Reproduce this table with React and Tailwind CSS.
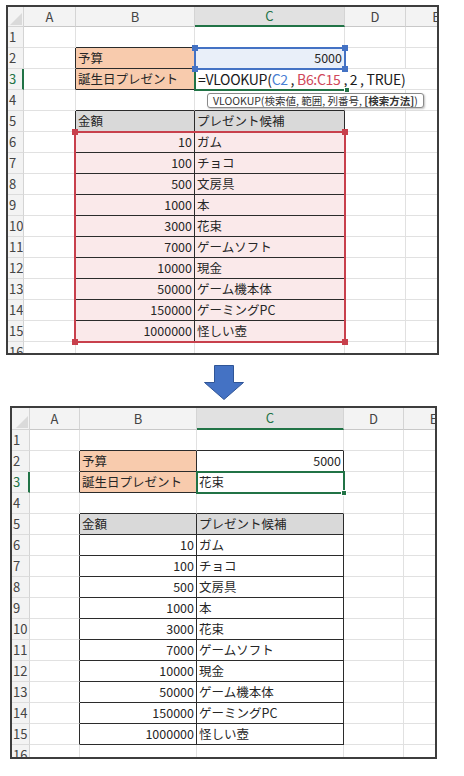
import React from 'react'

const items = [
  [10, 'ガム'],
  [100, 'チョコ'],
  [500, '文房具'],
  [1000, '本'],
  [3000, '花束'],
  [7000, 'ゲームソフト'],
  [10000, '現金'],
  [50000, 'ゲーム機本体'],
  [150000, 'ゲーミングPC'],
  [1000000, '怪しい壺'],
]

const font = { fontFamily: '"Noto Sans CJK JP", "Noto Sans", sans-serif' }

const inTable = (r, c) => (c === 2 || c === 3) && ((r >= 2 && r <= 3) || (r >= 5 && r <= 15))

// value of cell (row, col) in the sheet; col 2 = B, col 3 = C
const cellValue = (r, c, after) => {
  if (r === 2 && c === 2) return { text: '予算' }
  if (r === 3 && c === 2) return { text: '誕生日プレゼント' }
  if (r === 2 && c === 3) return { text: '5000', right: true }
  if (r === 3 && c === 3 && after) return { text: '花束' }
  if (r === 5 && c === 2) return { text: '金額' }
  if (r === 5 && c === 3) return { text: 'プレゼント候補' }
  if (r >= 6 && r <= 15 && c === 2) return { text: String(items[r - 6][0]), right: true }
  if (r >= 6 && r <= 15 && c === 3) return { text: items[r - 6][1] }
  return null
}

const cellFill = (r, c, after) => {
  if ((r === 2 || r === 3) && c === 2) return 'bg-[#f8cbad]'
  if (r === 5 && (c === 2 || c === 3)) return 'bg-[#d9d9d9]'
  if (!after && r === 2 && c === 3) return 'bg-[#e9eff9]'
  if (!after && r >= 6 && r <= 15 && (c === 2 || c === 3)) return 'bg-[#fae9ea]'
  return 'bg-white'
}

const Corner = () => (
  <div className="relative bg-[#f3f3f3] border-r border-b border-[#d4d4d4]">
    <svg className="absolute right-[1px] bottom-[1px]" width="12" height="12" viewBox="0 0 12 12">
      <polygon points="12,0 12,12 0,12" fill="#dadada" />
    </svg>
  </div>
)

function Sheet({ after }) {
  const cols = ['A', 'B', 'C', 'D', 'E']
  const cells = []
  cells.push(<Corner key="corner" />)
  cols.forEach((l) => {
    const sel = l === 'C'
    cells.push(
      <div
        key={'h' + l}
        className={
          'flex items-center justify-center text-[13px] border-r border-[#d4d4d4] ' +
          (sel
            ? 'bg-[#e1e1e1] text-[#217346] border-b-2 border-b-[#217346]'
            : 'bg-[#f3f3f3] text-[#444] border-b border-b-[#c8c8c8]')
        }
        style={font}
      >
        {l}
      </div>
    )
  })
  for (let r = 1; r <= 16; r++) {
    cells.push(
      <div
        key={'r' + r}
        className={
          'flex items-center pl-[1px] text-[13px] bg-[#f3f3f3] border-b border-b-[#dcdcdc] overflow-hidden ' +
          (r === 3 ? 'text-[#217346] border-r-2 border-r-[#217346]' : 'text-[#444] border-r border-r-[#d4d4d4]')
        }
        style={font}
      >
        {r}
      </div>
    )
    for (let c = 1; c <= 5; c++) {
      const v = cellValue(r, c, after)
      const br = inTable(r, c) || inTable(r, c + 1) ? 'border-r-[#2b2b2b]' : 'border-r-[#e1e1e1]'
      const bb = inTable(r, c) || inTable(r + 1, c) ? 'border-b-[#2b2b2b]' : 'border-b-[#e1e1e1]'
      cells.push(
        <div
          key={r + '-' + c}
          className={
            'flex items-center px-[2px] text-[12.5px] text-[#262626] whitespace-nowrap border-r border-b ' +
            br + ' ' + bb + ' ' + cellFill(r, c, after) + (v && v.right ? ' justify-end' : '')
          }
          style={font}
        >
          {v ? v.text : ''}
        </div>
      )
    }
  }
  return cells
}

// range outline with a square handle at each corner
const Range = ({ className, color }) => (
  <div className={'absolute border-2 ' + className}>
    <div className={'absolute -left-[4px] -top-[4px] w-[6px] h-[6px] ' + color} />
    <div className={'absolute -right-[4px] -top-[4px] w-[6px] h-[6px] ' + color} />
    <div className={'absolute -left-[4px] -bottom-[4px] w-[6px] h-[6px] ' + color} />
    <div className={'absolute -right-[4px] -bottom-[4px] w-[6px] h-[6px] ' + color} />
  </div>
)

const Active = ({ className }) => (
  <div className={'absolute border-[#217346] ' + className}>
    <div className="absolute -right-[4px] -bottom-[4px] w-[6px] h-[6px] bg-[#217346] border border-white" />
  </div>
)

function TopSheet() {
  return (
    <div className="ml-[6px] mt-[5px] w-[433px] h-[350px] border-2 border-[#3d3d3d] overflow-hidden">
      <div className="relative grid grid-cols-[16px_52px_119px_150px_61px_61px] grid-rows-[20px_repeat(16,21px)]">
        <Sheet after={false} />

        {/* cell editor over C3 with the formula */}
        <div
          className="absolute left-[187px] top-[62px] w-[222px] h-[20px] bg-white flex items-center pl-[3px] text-[14px] tracking-[-0.3px] text-[#1a1a1a] whitespace-nowrap"
          style={font}
        >
          =VLOOKUP(<span className="text-[#4a7fd4]">C2</span>&nbsp;,&nbsp;
          <span className="text-[#d0485a]">B6:C15</span>&nbsp;, 2 , TRUE)
        </div>
        <Active className="left-[186px] top-[61px] w-[152px] h-[23px] border-l-2 border-b-2" />

        <Range className="left-[186px] top-[40px] w-[152px] h-[23px] border-[#4472c4]" color="bg-[#4472c4]" />
        <Range className="left-[66px] top-[124px] w-[272px] h-[212px] border-[#c8404c]" color="bg-[#c8404c]" />

        {/* argument tooltip */}
        <div
          className="absolute left-[199px] top-[86px] h-[15px] px-[5px] flex items-center bg-white border border-[#8a8a8a] rounded-[3px] shadow-[1px_1px_2px_rgba(0,0,0,0.25)] text-[10.5px] text-[#333] whitespace-nowrap"
          style={font}
        >
          VLOOKUP(検索値, 範囲, 列番号,&nbsp;<span className="font-bold">[検索方法]</span>)
        </div>
      </div>
    </div>
  )
}

function BottomSheet() {
  return (
    <div className="ml-[10px] w-[427px] h-[353px] border-2 border-[#3d3d3d] overflow-hidden">
      <div className="relative grid grid-cols-[18px_50px_117px_147px_60px_60px] grid-rows-[22px_repeat(16,21px)]">
        <Sheet after={true} />
        <Active className="left-[184px] top-[63px] w-[149px] h-[23px] border-2" />
      </div>
    </div>
  )
}

export default function App() {
  return (
    <div className="w-[464px] h-[776px] bg-white overflow-hidden">
      <TopSheet />
      <div className="mt-[10px] mb-[6px] h-[35px] flex justify-center pr-[16px]">
        <svg width="42" height="35" viewBox="0 0 42 35">
          <polygon
            points="11.5,0.5 30.5,0.5 30.5,17.5 40.5,17.5 21,34.5 1.5,17.5 11.5,17.5"
            fill="#4472c4"
            stroke="#2f5597"
            strokeWidth="1"
          />
        </svg>
      </div>
      <BottomSheet />
    </div>
  )
}
